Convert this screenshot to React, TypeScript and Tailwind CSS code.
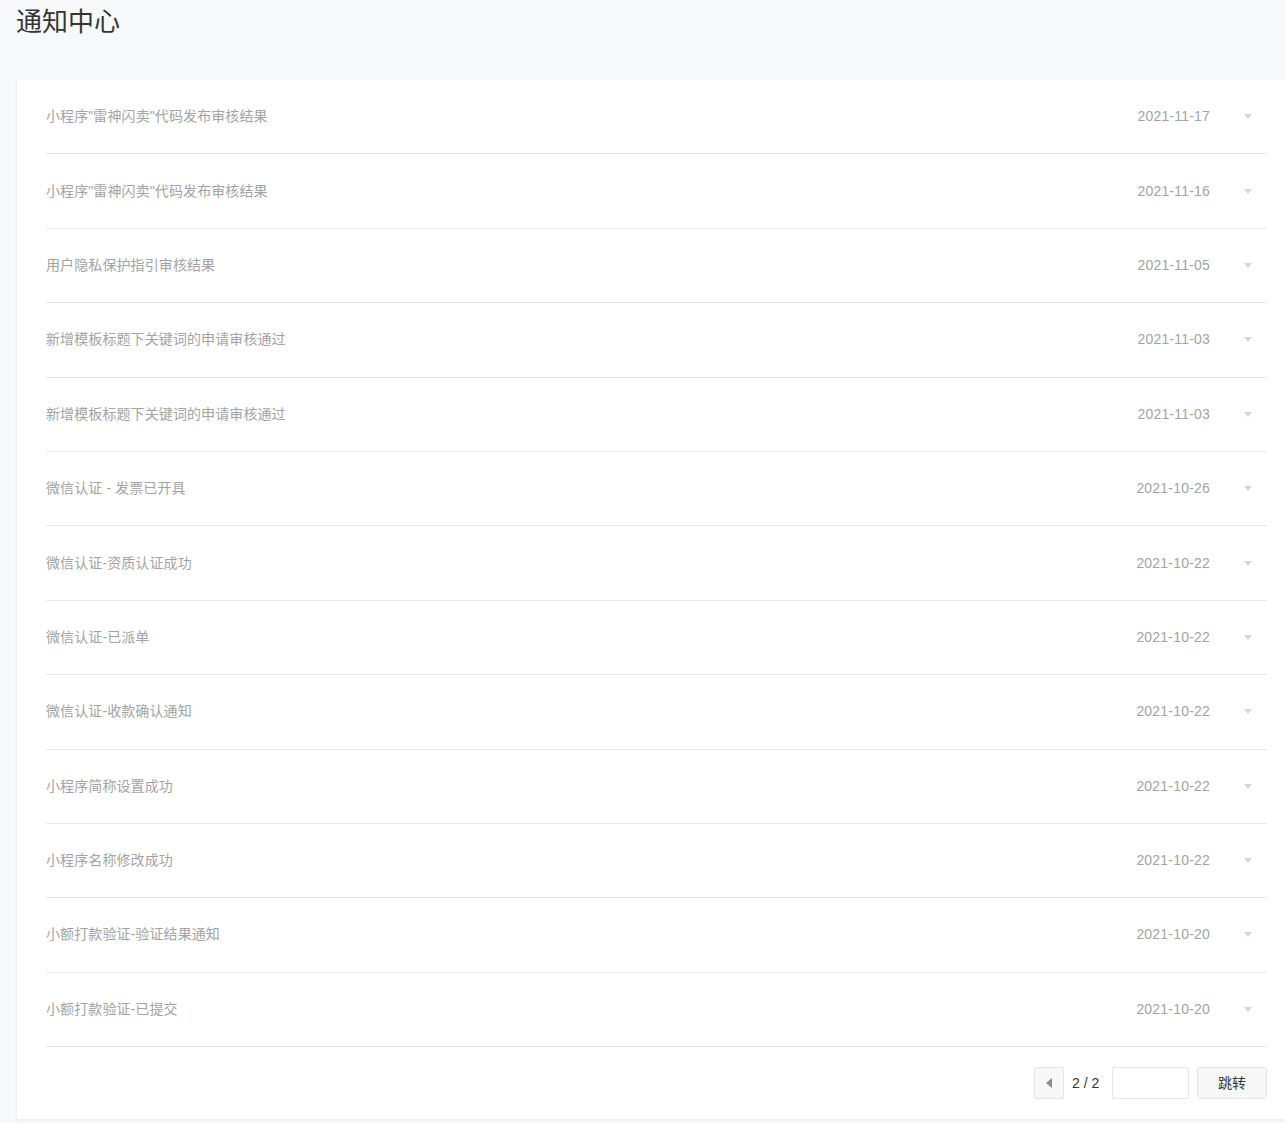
const items: [string, string][] = [
  ['小程序"雷神闪卖"代码发布审核结果', "2021-11-17"],
  ['小程序"雷神闪卖"代码发布审核结果', "2021-11-16"],
  ["用户隐私保护指引审核结果", "2021-11-05"],
  ["新增模板标题下关键词的申请审核通过", "2021-11-03"],
  ["新增模板标题下关键词的申请审核通过", "2021-11-03"],
  ["微信认证 - 发票已开具", "2021-10-26"],
  ["微信认证-资质认证成功", "2021-10-22"],
  ["微信认证-已派单", "2021-10-22"],
  ["微信认证-收款确认通知", "2021-10-22"],
  ["小程序简称设置成功", "2021-10-22"],
  ["小程序名称修改成功", "2021-10-22"],
  ["小额打款验证-验证结果通知", "2021-10-20"],
  ["小额打款验证-已提交", "2021-10-20"],
];

export default function App() {
  return (
    <div
      className="min-h-[1123px] w-[1285px] bg-[#f7f8fa] overflow-hidden"
      style={{ fontFamily: '"Liberation Sans", "Noto Sans CJK SC", sans-serif' }}
    >
      <h1 className="pl-[16px] pt-[4px] h-[80px] text-[26px] leading-[36px] text-[#353535] font-normal">
        通知中心
      </h1>

      <div className="ml-[17px] w-[1268px] bg-white shadow-[0_1px_3px_rgba(0,0,0,0.08)] pl-[29px] pr-[18px] pb-[20px]">
        {items.map(([title, date], i) => (
          <div
            key={i}
            className="h-[74.4px] flex items-center border-b border-[#e7e7e7] text-[14px] text-[#a3a3a3]"
          >
            <span className="flex-1 tracking-[0.1px]">{title}</span>
            <span className="w-[76px] text-right tracking-[0.2px]">{date}</span>
            <span className="w-[57px] flex justify-end pr-[15px]">
              <svg width="8" height="5" viewBox="0 0 8 5">
                <path d="M0 0h8L4 5z" fill="#d6d6d6" />
              </svg>
            </span>
          </div>
        ))}

        <div className="flex items-center justify-end pt-[20px] text-[14px] text-[#353535]">
          <button className="w-[30px] h-[32px] border border-[#e5e5e5] rounded-[2px] bg-[#f7f7f7] flex items-center justify-center">
            <svg width="6" height="10" viewBox="0 0 6 10">
              <path d="M6 0v10L0 5z" fill="#8c8c8c" />
            </svg>
          </button>
          <span className="ml-[8px] w-[32px]">2 / 2</span>
          <input className="ml-[8px] w-[77px] h-[32px] border border-[#e5e5e5] rounded-[2px] outline-none" />
          <button className="ml-[8px] w-[70px] h-[32px] border border-[#e5e5e5] rounded-[3px] bg-[#f7f7f7] text-[#353535]">
            跳转
          </button>
        </div>
      </div>
    </div>
  );
}
